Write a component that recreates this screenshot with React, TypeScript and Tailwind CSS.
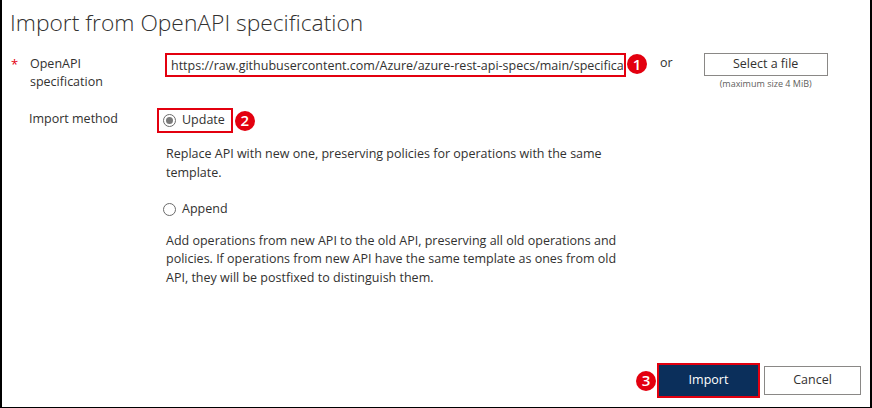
import React from 'react';

const Badge: React.FC<{ n: number }> = ({ n }) => (
  <span className="flex h-[20px] w-[20px] shrink-0 items-center justify-center rounded-full bg-[#e3000f] text-[15px] font-semibold leading-none text-white">
    {n}
  </span>
);

const Radio: React.FC<{ checked?: boolean }> = ({ checked }) => (
  <span className="flex h-[13px] w-[13px] shrink-0 items-center justify-center rounded-full border border-[#6b6b6b] bg-white">
    {checked && <span className="h-[7px] w-[7px] rounded-full bg-[#7a7a7a]"></span>}
  </span>
);

const App: React.FC = () => {
  return (
    <div
      className="flex h-[408px] w-[872px] flex-col border-b border-l-2 border-r-2 border-black bg-white text-[12.5px] text-[#323130]"
      style={{ fontFamily: '"Open Sans", "Noto Sans", sans-serif' }}
    >
      <h1 className="ml-[8px] mt-[8px] text-[22.8px] font-light leading-[30px] text-[#323130]">
        Import from OpenAPI specification
      </h1>

      {/* OpenAPI specification row */}
      <div className="mt-[15px] flex items-start">
        <span className="ml-[9px] w-[19px] pt-[2px] text-[13px] text-[#e3000f]">*</span>
        <div className="w-[135px] pt-[2px] leading-[18px]">
          OpenAPI
          <br />
          specification
        </div>
        <div className="h-[24px] w-[461px] overflow-hidden border-2 border-[#e3000f] pl-[4px] pt-[2px]">
          <span className="block w-[453px] overflow-hidden whitespace-nowrap text-[#323130]">
            https://raw.githubusercontent.com/Azure/azure-rest-api-specs/main/specificat
          </span>
        </div>
        <div className="ml-[1px] mt-[1px]">
          <Badge n={1} />
        </div>
        <span className="ml-[13px] pt-[1px]">or</span>
        <div className="ml-[31px] flex flex-col items-center">
          <button className="h-[23px] w-[124px] border border-[#8a8886] bg-white text-[12.5px] leading-none text-[#323130]">
            Select a file
          </button>
          <span className="mt-[2px] text-[9px] leading-[12px] text-[#605e5c]">(maximum size 4 MiB)</span>
        </div>
      </div>

      {/* Import method */}
      <div className="mt-[17px] flex items-start">
        <div className="ml-[27px] w-[128px] pt-[2px] leading-[18px]">Import method</div>
        <div className="flex w-[460px] flex-col">
          <div className="flex items-center">
            <div className="flex h-[25px] items-center gap-[6px] border-2 border-[#e3000f] pl-[4px] pr-[6px]">
              <Radio checked />
              <span>Update</span>
            </div>
            <div className="ml-[2px]">
              <Badge n={2} />
            </div>
          </div>
          <p className="ml-[9px] mt-[12px] w-[455px] leading-[18.5px]">
            Replace API with new one, preserving policies for operations with the same template.
          </p>
          <div className="ml-[6px] mt-[18px] flex items-center gap-[6px]">
            <Radio />
            <span>Append</span>
          </div>
          <p className="ml-[9px] mt-[13px] w-[455px] leading-[18.5px]">
            Add operations from new API to the old API, preserving all old operations and policies. If operations
            from new API have the same template as ones from old API, they will be postfixed to distinguish them.
          </p>
        </div>
      </div>

      {/* Footer buttons */}
      <div className="mb-[9px] mr-[9px] mt-auto flex items-center justify-end">
        <Badge n={3} />
        <div className="ml-[1px] flex h-[35px] w-[103px] items-center justify-center border-2 border-[#e3000f] bg-[#0b2f5b] text-white">
          Import
        </div>
        <button className="ml-[4px] h-[29px] w-[97px] border border-[#8a8886] bg-white text-[#323130]">
          Cancel
        </button>
      </div>
    </div>
  );
};

export default App;
